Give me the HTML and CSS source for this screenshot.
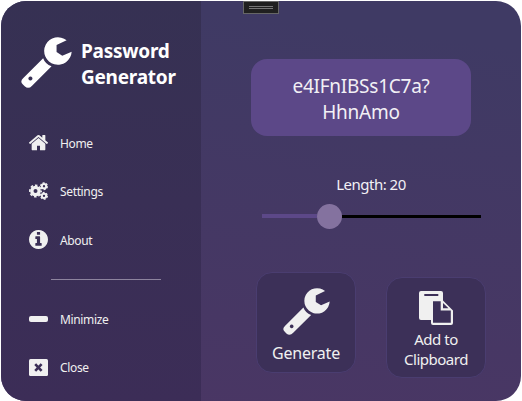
FILE: index.html
```html
<!DOCTYPE html>
<html lang="en">
<head>
<meta charset="utf-8">
<title>Password Generator</title>
<link rel="stylesheet" href="styles.css">
</head>
<body>
<svg class="defs" width="0" height="0">
  <symbol id="wrench" viewBox="17 19 152 152">
    <path d="M153 29L123 43V64L140 75L168 63A41 41 0 1 1 153 29Z"/>
    <path fill-rule="evenodd" d="M83 82Q89 99 108 106L50 164Q39 176 28 166L22 160Q13 151 24 141ZM45 137a6 6 0 1 0 .1 0Z"/>
  </symbol>
</svg>
<div class="window">
  <aside class="sidebar">
    <header class="brand">
      <svg class="brand-icon"><use href="#wrench"/></svg>
      <h1>Password<br>Generator</h1>
    </header>
    <nav>
      <a class="item home"><svg viewBox="96 253 1600 1283" class="icon"><path d="M1472 992v480q0 26-19 45t-45 19h-384v-384h-256v384h-384q-26 0-45-19t-19-45v-480q0-1 .5-3t.5-3l575-474 575 474q1 2 1 6zm223-69l-62 74q-8 9-21 11h-3q-13 0-21-7l-692-577-692 577q-12 8-24 7-13-2-21-11l-62-74q-8-10-7-23.5t11-21.5l719-599q32-26 76-26t76 26l244 204v-195q0-14 9-23t23-9h192q14 0 23 9t9 23v408l219 182q10 8 11 21.5t-7 23.5z"/></svg><span>Home</span></a>
      <a class="item settings"><svg viewBox="0 0 57 54" class="icon cogs">
        <g fill="none"><circle cx="19.500" cy="27" r="11" stroke-width="10"/><circle cx="19.500" cy="27" r="17" stroke-width="5" stroke-dasharray="7.700 5.650" stroke-dashoffset="3.850"/>
        <circle cx="45" cy="12.500" r="6.500" stroke-width="6"/><circle cx="45" cy="12.500" r="10" stroke-width="4" stroke-dasharray="5.800 4.670"/>
        <circle cx="45" cy="41.500" r="6.500" stroke-width="6"/><circle cx="45" cy="41.500" r="10" stroke-width="4" stroke-dasharray="5.800 4.670"/></g></svg><span>Settings</span></a>
      <a class="item about"><svg viewBox="128 128 1536 1536" class="icon"><path d="M1152 1376v-160q0-14-9-23t-23-9h-96v-512q0-14-9-23t-23-9h-320q-14 0-23 9t-9 23v160q0 14 9 23t23 9h96v320h-96q-14 0-23 9t-9 23v160q0 14 9 23t23 9h448q14 0 23-9t9-23zm-128-896v-160q0-14-9-23t-23-9h-192q-14 0-23 9t-9 23v160q0 14 9 23t23 9h192q14 0 23-9t9-23zm640 416q0 209-103 385.500t-279.500 279.500-385.500 103-385.500-103-279.500-279.500-103-385.500 103-385.500 279.500-279.500 385.500-103 385.500 103 279.500 279.500 103 385.500z"/></svg><span>About</span></a>
      <hr>
      <a class="item minimize"><svg viewBox="0 0 19 6" class="icon"><rect width="19" height="6" rx="2"/></svg><span>Minimize</span></a>
      <a class="item close"><svg viewBox="0 0 19 17" class="icon"><rect width="19" height="17" rx="1.500"/><path class="cross" d="M6.200 5.200L12.600 11.800M12.600 5.200L6.200 11.800"/></svg><span>Close</span></a>
    </nav>
  </aside>
  <main>
    <div class="password">e4IFnIBSs1C7a?<br>HhnAmo</div>
    <div class="length">Length: 20</div>
    <div class="slider"><i class="filled"></i><i class="thumb"></i><i class="rest"></i></div>
    <div class="actions">
      <button class="generate"><svg class="wrench"><use href="#wrench"/></svg><span>Generate</span></button>
      <button class="copy"><svg class="clipboard" viewBox="0 0 34 34"><path fill-rule="evenodd" d="M2 0H22Q24 0 24 2V9.500L34 19.500V32Q34 34 32 34H14Q12 34 12 32V29H2Q0 29 0 27V2Q0 0 2 0ZM5.300 3V5H19.300V3ZM14 10.200H21.700V19.500H31.800V31.800H14ZM24 12V17.300H29.500Z"/></svg><span class="add">Add to</span><span class="clip">Clipboard</span></button>
    </div>
  </main>
  <div class="handle"></div>
</div>
</body>
</html>
```
FILE: styles.css
```css
* { box-sizing: border-box; }
body { margin: 0; padding: 1px 0 0 1px; background: #fff; overflow: hidden; font-family: "Noto Sans", "Open Sans", sans-serif; }
.defs { display: block; position: absolute; }
.window { position: relative; display: flex; width: 520px; height: 400px; border-radius: 25px; overflow: hidden; background: linear-gradient(187deg, #3f3a64 10%, #4a3664); }
svg { display: block; flex: none; }
.sidebar { width: 200px; background: linear-gradient(#363153, #3c2d57); color: #fff; }
.brand { display: flex; height: 110px; padding: 36px 0 0 20px; }
.brand-icon { width: 51px; height: 51px; fill: #fff; }
h1 { margin: 1px 0 0 9px; font-size: 19px; line-height: 26px; font-weight: 700; letter-spacing: -.25px; white-space: nowrap; }
nav { display: flex; flex-direction: column; color: #f0f0f0; fill: #f0f0f0; }
.item { display: flex; align-items: center; height: 48px; padding-left: 28px; gap: 12px; font-size: 12px; letter-spacing: -.35px; }
.item span { padding-bottom: 0; }
.about span { padding-top: 2px; }
.home { margin-top: 8px; }
.about { height: 49px; }
.icon { width: 19px; }
.cogs { stroke: #f0f0f0; }
.cross { fill: none; stroke: #3b2e57; stroke-width: 2.6; }
hr { width: 110px; height: 1px; margin: 15px 0 15px 50px; border: 0; background: #8d849e; }
main { width: 320px; color: #f2f0f5; }
.password { width: 220px; height: 77px; margin: 58px 0 0 50px; padding-top: 14px; border-radius: 16px; background: #5c4888; text-align: center; font-size: 19px; line-height: 26px; letter-spacing: -.25px; }
.length { width: 220px; height: 22px; margin: 37px 0 0 60px; text-align: center; font-size: 15px; line-height: 22px; letter-spacing: -.5px; }
.slider { display: flex; align-items: center; width: 219px; height: 26px; margin: 8px 0 0 61px; }
.filled { width: 55px; height: 4px; background: #5c4888; }
.thumb { width: 25px; height: 25px; border-radius: 50%; background: #84729f; }
.rest { flex: 1; height: 3px; background: #000; }
.actions { display: flex; gap: 30px; margin: 43px 0 0 55px; }
button { display: flex; flex-direction: column; align-items: center; width: 100px; height: 101px; padding: 0; border: 1px solid #4a3d70; border-radius: 16px; background: #3c3058; color: #f0f0f0; fill: #f0f0f0; font-family: inherit; white-space: nowrap; }
.wrench { width: 47px; height: 47px; margin-top: 15px; }
.generate span { margin-top: 6px; font-size: 16px; line-height: 24px; letter-spacing: -.2px; }
.copy { margin-top: 5px; font-size: 15px; letter-spacing: -.5px; }
.clipboard { width: 34px; height: 34px; margin-top: 13px; }
.copy span { line-height: 20px; }
.add { margin-top: 4px; }
.handle { position: absolute; left: 242px; top: 0; width: 36px; height: 13px; border: 1px solid #666; background: linear-gradient(#777, #777) center 4px / 24px 1px no-repeat, linear-gradient(#777, #777) center 6px / 24px 1px no-repeat, #202020; }
```
